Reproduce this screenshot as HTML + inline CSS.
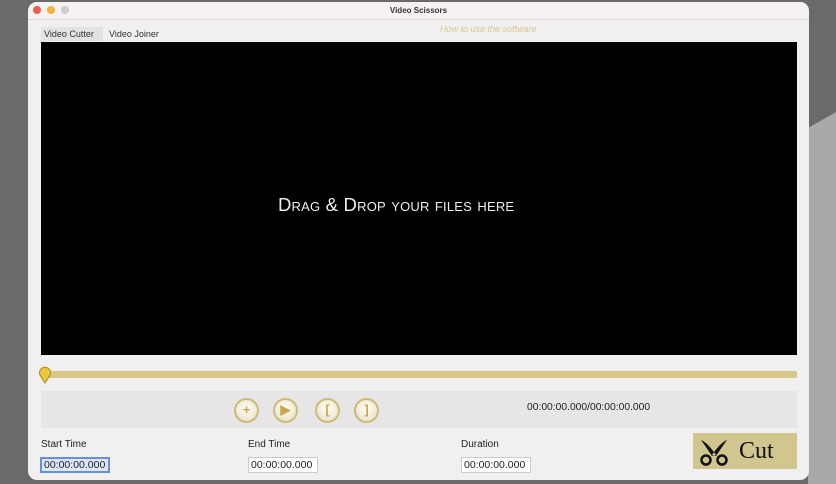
<!DOCTYPE html>
<html><head><style>
body{margin:0;width:836px;height:484px;overflow:hidden;background:#6a6a6a;font-family:"Liberation Sans",sans-serif;position:relative}
.a{position:absolute}
.win{left:28px;top:2px;width:781px;height:478px;background:#f1efef;border-radius:9px;overflow:hidden}
.btn{width:25px;height:25px;border-radius:50%;background:radial-gradient(circle at 50% 40%,#fffef8,#e6dcc0);border:2.5px solid #cdbb78;box-sizing:border-box;top:396px;color:#c9a84a;font-weight:bold;font-size:13px;text-align:center;line-height:20px}
.lbl{font-size:10px;color:#222;top:437px}
.inp{top:455px;height:16px;background:#fff;border:1px solid #ccc;font-size:10.5px;line-height:15px;padding:0 2px;color:#222;box-sizing:border-box}
</style></head><body>
<svg class="a" style="left:808px;top:0" width="28" height="484"><polygon points="0,128 28,112 28,484 0,484" fill="#a9a9a9"/></svg>
<div class="a win">
 <div class="a" style="left:0;top:0;width:781px;height:17px;background:#f6f2f2;border-bottom:1px solid #dcd6d6"></div>
 <div class="a" style="left:5px;top:4px;width:8px;height:8px;border-radius:50%;background:#ee5b55"></div>
 <div class="a" style="left:19px;top:4px;width:8px;height:8px;border-radius:50%;background:#f2b53b"></div>
 <div class="a" style="left:33px;top:4px;width:8px;height:8px;border-radius:50%;background:#cfcaca"></div>
 <div class="a" style="left:0;width:781px;top:4px;text-align:center;font-size:8px;font-weight:bold;color:#333">Video Scissors</div>
 <div class="a" style="left:13px;top:25px;width:62px;height:14px;background:#e4e2e2"></div>
 <div class="a" style="left:16px;top:27px;font-size:9px;color:#333">Video Cutter</div>
 <div class="a" style="left:81px;top:27px;font-size:9px;color:#333">Video Joiner</div>
 <div class="a" style="left:412px;top:22px;font-size:9px;font-style:italic;color:#d5c98e">How to use the software</div>
 <div class="a" style="left:13px;top:40px;width:756px;height:313px;background:#000"></div>
 <div class="a" style="left:250px;top:192px;white-space:nowrap;color:#eee;font-size:18.5px;font-variant:small-caps;letter-spacing:0.2px">Drag &amp; Drop your files here</div>
 <div class="a" style="left:13px;top:369px;width:756px;height:7px;background:#d7c887"></div>
 <svg class="a" style="left:10px;top:364px" width="14" height="18"><path d="M7 17 L2 9 A5.5 5.5 0 1 1 12 9 Z" fill="#e9c93a" stroke="#a8892a" stroke-width="1"/></svg>
 <div class="a" style="left:13px;top:389px;width:756px;height:37px;background:#e7e5e5"></div>
 <div class="a btn" style="left:206px">+</div>
 <div class="a btn" style="left:245px">▶</div>
 <div class="a btn" style="left:287px">[</div>
 <div class="a btn" style="left:326px">]</div>
 <div class="a" style="left:499px;top:400px;font-size:10.3px;color:#222">00:00:00.000/00:00:00.000</div>
 <div class="a lbl" style="left:13px">Start Time</div>
 <div class="a lbl" style="left:220px">End Time</div>
 <div class="a lbl" style="left:433px">Duration</div>
 <div class="a inp" style="left:12px;width:70px;border:2px solid #6a8fd8;background:#dbe6fb;line-height:13px">00:00:00.000</div>
 <div class="a inp" style="left:220px;width:70px">00:00:00.000</div>
 <div class="a inp" style="left:433px;width:70px">00:00:00.000</div>
 <div class="a" style="left:665px;top:431px;width:104px;height:36px;background:#d1c68d"></div>
 <svg class="a" style="left:670px;top:435px" width="34" height="30"><g fill="none" stroke="#111" stroke-width="2.5"><circle cx="8" cy="23" r="4.5"/><circle cx="24" cy="23" r="4.5"/></g><path d="M3 3 Q10 6 18 18 L14 19 Q8 10 3 3 Z M29 3 Q22 6 14 18 L18 19 Q24 10 29 3 Z" fill="#111"/></svg>
 <div class="a" style="left:711px;top:436px;font-family:'Liberation Serif',serif;font-size:24px;color:#111">Cut</div>
</div>
</body></html>
